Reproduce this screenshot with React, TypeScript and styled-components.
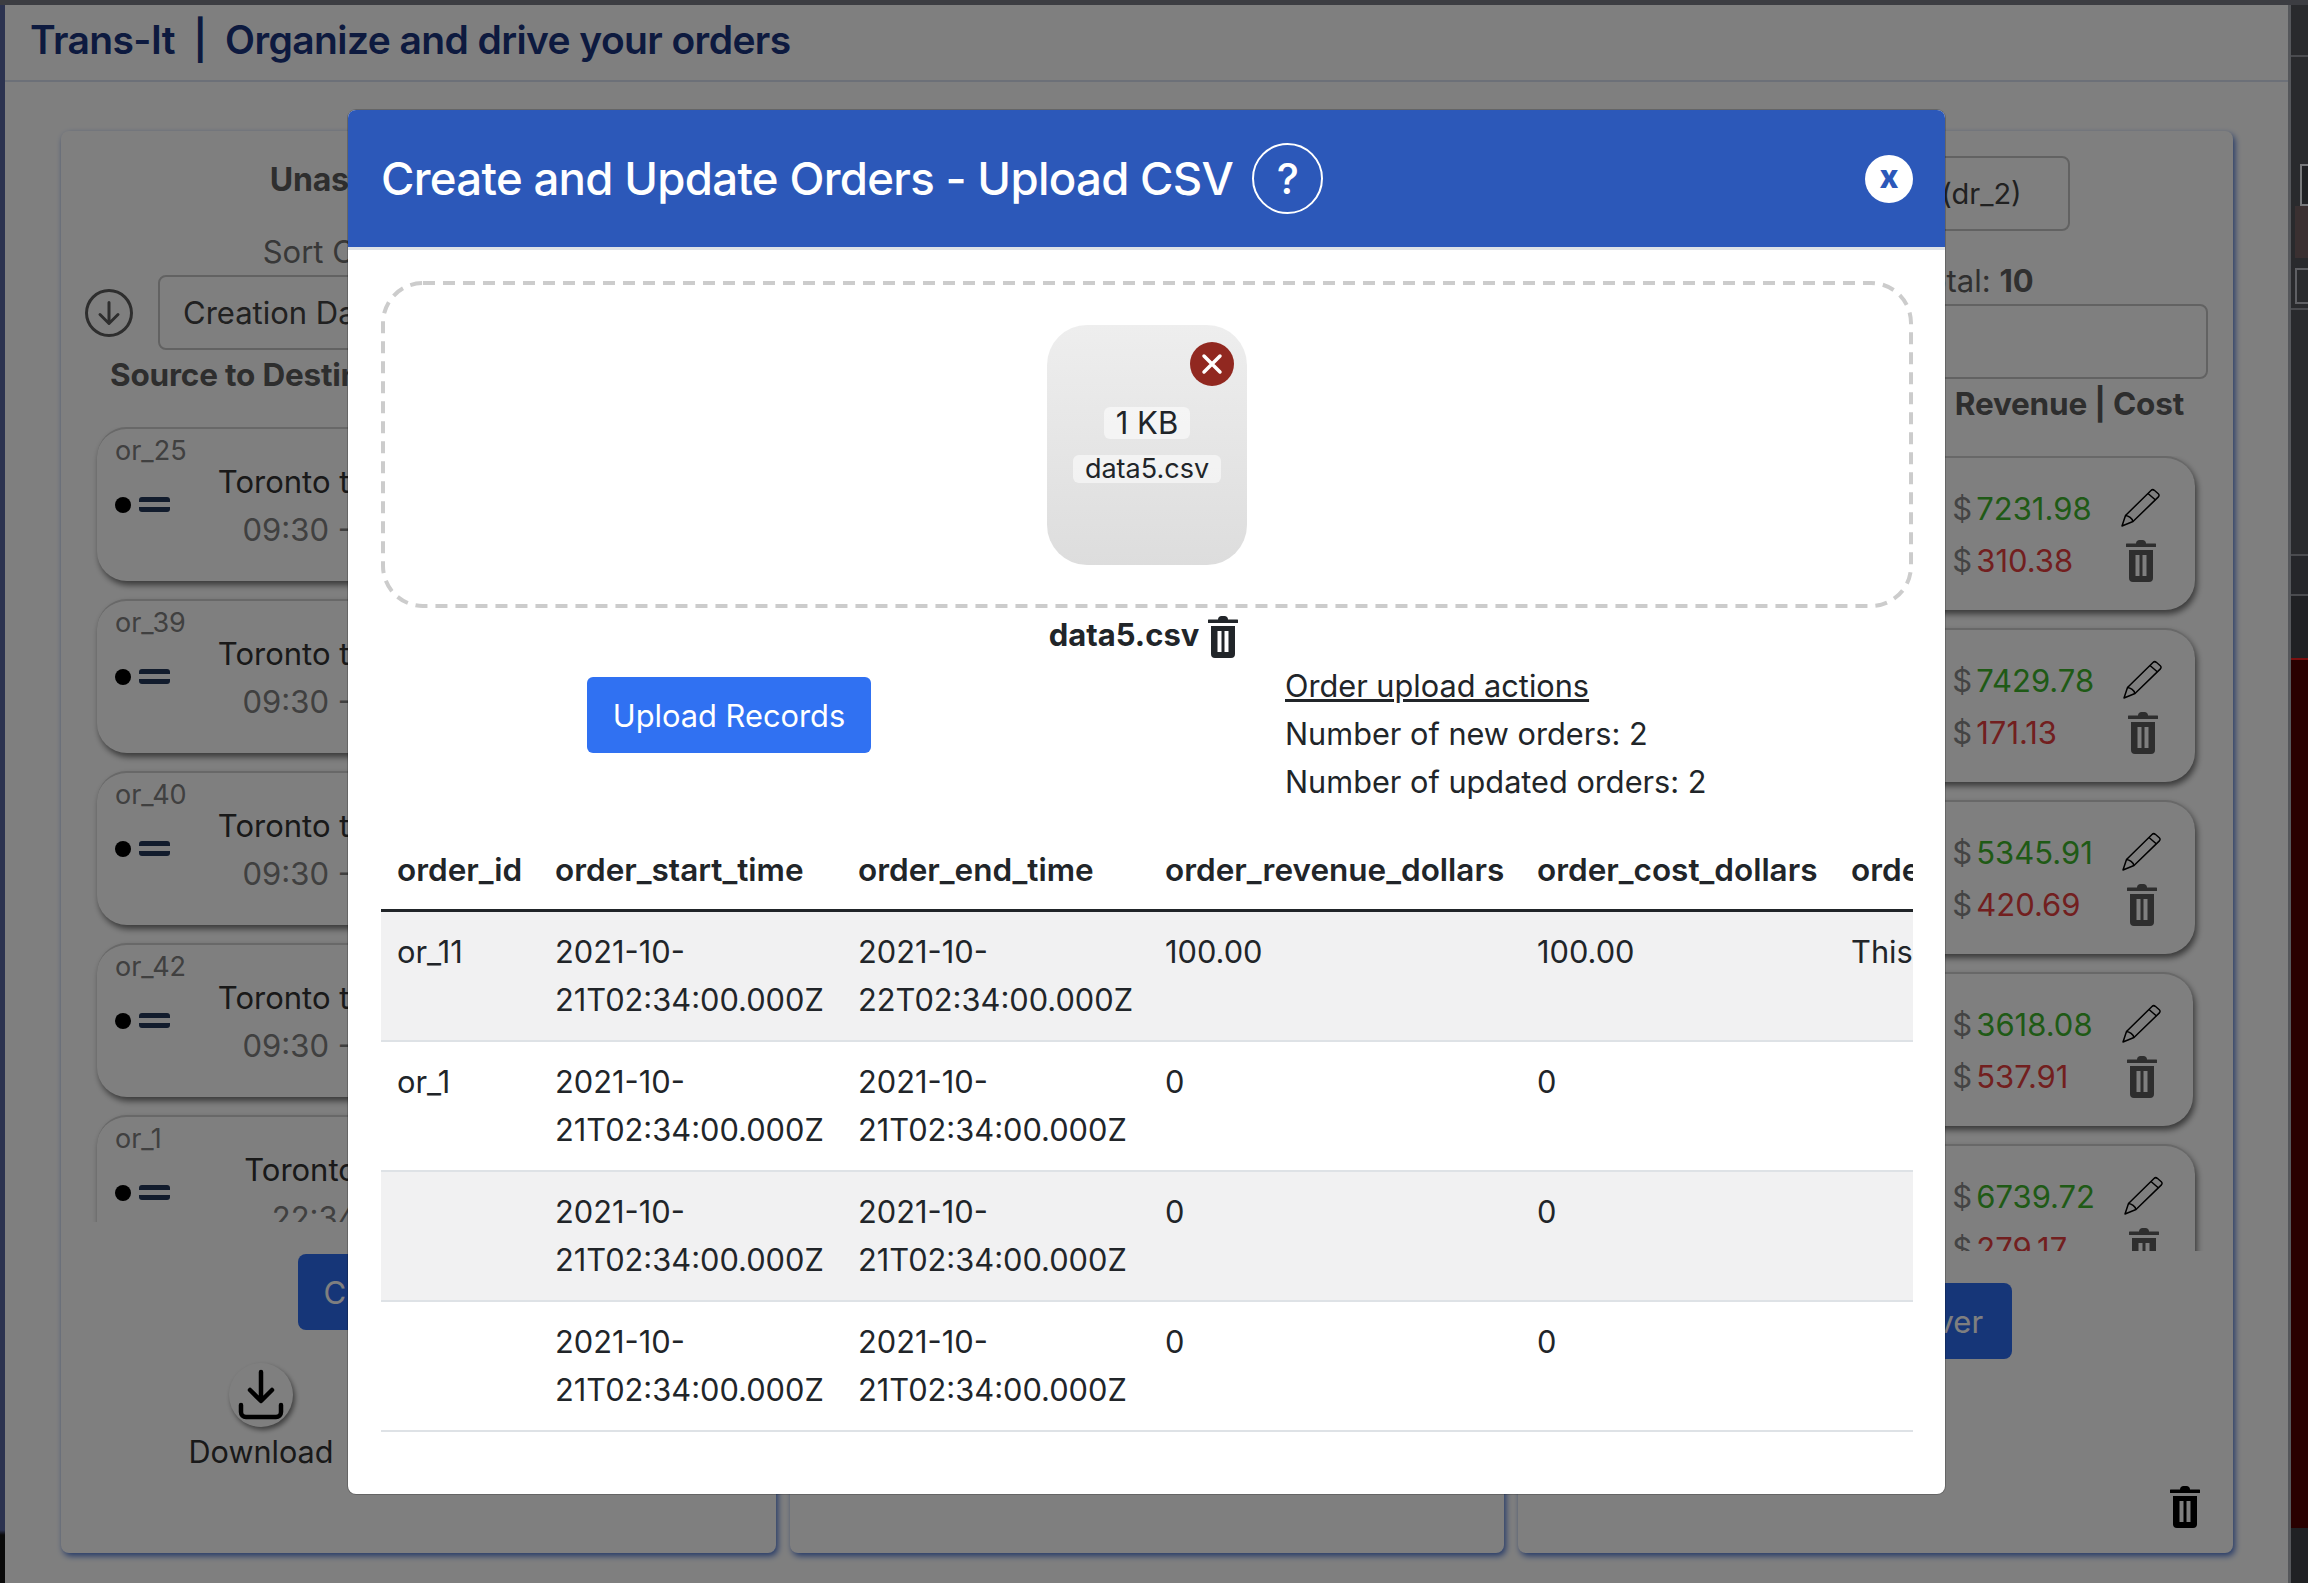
import React from 'react';
import styled, { createGlobalStyle } from 'styled-components';
import { BsArrowDownCircle } from 'react-icons/bs';

const GlobalStyle = createGlobalStyle`
  html, body {
    margin: 0;
    padding: 0;
    height: 1583px;
    overflow: hidden;
    background: #000;
    font-family: Inter, "Noto Sans", sans-serif;
    color: #212529;
  }
  * { box-sizing: border-box; }
`;

const Screen = styled.div`
  width: 2308px;
  height: 1583px;
  display: flex;
  flex-direction: column;
`;

const TopStrip = styled.div`
  height: 5px;
  background: #3c3d42;
  flex: none;
`;

const Frame = styled.div`
  flex: 1;
  display: flex;
  min-height: 0;
`;

const LeftEdge = styled.div`
  width: 5px;
  flex: none;
  background: linear-gradient(to bottom, #2c3350 0, #2c3350 1525px, #0a0a0a 1530px);
`;

const Main = styled.div`
  flex: 1;
  position: relative;
  background: #fff;
  overflow: hidden;
  display: flex;
  flex-direction: column;
`;

const Gutter = styled.div`
  width: 3px;
  flex: none;
  background: #55575b;
`;

const DevPanel = styled.div`
  width: 17px;
  flex: none;
  display: flex;
  flex-direction: column;
  background: #292a2d;
`;

const DevSection = styled.div<{ $h?: number; $bg?: string; $line?: string }>`
  height: ${p => (p.$h ? `${p.$h}px` : 'auto')};
  flex: ${p => (p.$h ? 'none' : '1')};
  background: ${p => p.$bg || '#292a2d'};
  border-bottom: 2px solid ${p => p.$line || '#4a4b4f'};
  padding-top: 1px;
`;

const DevBlock = styled.div<{ $left: number; $top: number; $h: number; $bg: string; $line?: string }>`
  margin: ${p => p.$top}px 0 0 ${p => p.$left}px;
  height: ${p => p.$h}px;
  background: ${p => p.$bg};
  border: ${p => (p.$line ? `2px solid ${p.$line}` : 'none')};
  border-right: none;
`;

const AppHeader = styled.header`
  height: 77px;
  flex: none;
  display: flex;
  align-items: center;
  padding: 0 0 7px 25px;
  border-bottom: 2px solid #d8e0f0;
  background: #fff;
`;

const AppTitle = styled.h1`
  margin: 0;
  font-size: 39px;
  font-weight: 600;
  color: #1a347f;
  white-space: pre;
  letter-spacing: -0.6px;
`;

const Board = styled.div`
  display: flex;
  gap: 14px;
  padding: 49px 55px 0 56px;
`;

const Panel = styled.section`
  flex: 1;
  height: 1422px;
  min-width: 0;
  display: flex;
  flex-direction: column;
  align-items: center;
  border-radius: 8px;
  background: #fff;
  box-shadow: 2px 3px 6px #4a73d0;
`;

const PanelTitle = styled.div`
  margin-top: 30px;
  height: 38px;
  line-height: 38px;
  font-size: 32px;
  font-weight: 700;
  color: #5c5c5c;
  letter-spacing: -0.2px;
`;

const SortLabel = styled.div`
  margin-top: 33px;
  height: 40px;
  line-height: 40px;
  font-size: 31px;
  color: #707070;
`;

const ControlRow = styled.div`
  align-self: stretch;
  display: flex;
  align-items: center;
  gap: 25px;
  margin-top: 3px;
  padding: 0 17px 0 24px;
  color: #5c5c5c;
`;

const SelectBox = styled.div<{ $width?: number; $top?: number }>`
  flex: ${p => (p.$width ? 'none' : '1')};
  width: ${p => (p.$width ? `${p.$width}px` : 'auto')};
  height: 75px;
  margin-top: ${p => p.$top || 0}px;
  display: flex;
  align-items: center;
  justify-content: ${p => (p.$width ? 'flex-end' : 'flex-start')};
  padding: 0 46px 0 23px;
  border: 2px solid #c4c4c4;
  border-radius: 8px;
  font-size: ${p => (p.$width ? 29 : 31)}px;
  color: #424242;
  white-space: nowrap;
`;

const TotalLabel = styled.div`
  margin-top: 30px;
  height: 40px;
  line-height: 40px;
  font-size: 31px;
  color: #616161;
  white-space: nowrap;

  b { font-weight: 700; }
`;

const SearchBox = styled.div`
  align-self: stretch;
  height: 75px;
  margin: 3px 25px 0;
  border: 2px solid #c4c4c4;
  border-radius: 8px;
`;

const ColumnHeads = styled.div`
  align-self: stretch;
  display: flex;
  justify-content: space-between;
  height: 38px;
  line-height: 38px;
  margin-top: 6px;
  padding: 0 49px;
  font-size: 31.5px;
  font-weight: 700;
  color: #5c5c5c;
  letter-spacing: -0.2px;
  white-space: nowrap;
`;

const CardList = styled.div`
  align-self: stretch;
  height: 795px;
  flex: none;
  margin: 33px 25px 0;
  padding: 0 13px 0 11px;
  overflow: hidden;
  display: flex;
  flex-direction: column;
  gap: 18px;
`;

const Card = styled.div<{ $nudge?: number }>`
  flex: none;
  height: 154px;
  margin-right: ${p => p.$nudge || 0}px;
  padding: 10px 41px 0 18px;
  border-radius: 30px;
  background: #fff;
  border-top: 2px solid #d0d0d0;
  box-shadow: 2px 4px 6px rgba(0, 0, 0, 0.55);
`;

const CardId = styled.div`
  height: 24px;
  line-height: 24px;
  font-size: 27px;
  color: #808080;
`;

const CardBody = styled.div`
  height: 86px;
  display: flex;
  align-items: center;
`;

const DragGrip = styled.div`
  width: 55px;
  flex: none;
  display: flex;
  align-items: center;
  gap: 8px;
  margin-top: -3px;
`;

const GripDot = styled.span`
  width: 16px;
  height: 16px;
  border-radius: 50%;
  background: #000;
`;

const GripBars = styled.span`
  width: 31px;
  height: 15px;
  border-top: 5px solid #24385a;
  border-bottom: 5px solid #24385a;
  border-radius: 3px;
`;

const RouteCol = styled.div`
  width: 310px;
  margin-left: 15px;
  flex: none;
  text-align: center;
  white-space: nowrap;
`;

const RouteName = styled.div`
  height: 38px;
  line-height: 38px;
  font-size: 31px;
  color: #333;
`;

const RouteTime = styled.div`
  height: 38px;
  line-height: 38px;
  margin-top: 10px;
  font-size: 31px;
  color: #808080;
`;

const MoneyCol = styled.div`
  margin-left: auto;
  flex: none;
  display: flex;
  flex-direction: column;
  gap: 4px;
`;

const MoneyLine = styled.div`
  display: flex;
  gap: 4px;
  height: 48px;
  line-height: 48px;
  font-size: 31px;
  color: #888;
`;

const Amount = styled.span<{ $loss?: boolean }>`
  color: ${p => (p.$loss ? '#e43f3f' : '#3fb42c')};
`;

const ActionCol = styled.div`
  width: 38px;
  margin-left: 30px;
  flex: none;
  display: flex;
  flex-direction: column;
  align-items: center;
  gap: 13px;
  color: #000;

  svg:last-child { color: #5c5c5c; }
`;

const PrimaryBlock = styled.div<{ $width: number }>`
  width: ${p => p.$width}px;
  height: 76px;
  margin-top: 32px;
  flex: none;
  border-radius: 8px;
  background: #2d6cf0;
  color: #fff;
  display: flex;
  align-items: center;
  justify-content: center;
  font-size: 31px;
  white-space: nowrap;
`;

const DownloadCol = styled.div`
  align-self: flex-start;
  margin: 33px 0 0 130px;
  width: 140px;
  display: flex;
  flex-direction: column;
  align-items: center;
  gap: 5px;
  font-size: 30.6px;
  line-height: 40px;
  color: #333;
`;

const DownloadRound = styled.div`
  width: 64px;
  height: 64px;
  border-radius: 50%;
  background: #fff;
  color: #000;
  display: flex;
  align-items: center;
  justify-content: center;
  box-shadow: 2px 3px 5px rgba(0, 0, 0, 0.5);
`;

const PanelTrash = styled.div`
  margin: auto 33px 25px auto;
  line-height: 0;
  color: #000;
`;

/* modal */

const Overlay = styled.div`
  position: absolute;
  inset: 0;
  padding: 105px 0 0 343px;
  background: rgba(0, 0, 0, 0.5);
`;

const Modal = styled.div`
  width: 1597px;
  height: 1384px;
  border-radius: 8px;
  background: #fff;
  overflow: hidden;
  box-shadow: 0 0 0 1px rgba(0, 0, 0, 0.2);
`;

const ModalHead = styled.div`
  height: 140px;
  display: flex;
  align-items: center;
  padding: 0 32px 0 33px;
  background: #2c58b9;
  border-bottom: 3px solid #dee2e6;
  color: #fff;
`;

const ModalTitle = styled.h2`
  margin: 0;
  font-size: 45.6px;
  font-weight: 500;
  letter-spacing: -0.7px;
  white-space: nowrap;
`;

const HelpRound = styled.div`
  width: 71px;
  height: 71px;
  margin-left: 19px;
  border: 2px solid #fff;
  border-radius: 50%;
  display: flex;
  align-items: center;
  justify-content: center;
  font-size: 42px;
  font-weight: 500;
`;

const CloseRound = styled.div`
  width: 48px;
  height: 48px;
  margin-left: auto;
  border-radius: 50%;
  background: #fff;
  color: #2c58b9;
  display: flex;
  align-items: center;
  justify-content: center;
  font-size: 32px;
  font-weight: 800;
  line-height: 1;
  padding-bottom: 4px;
`;

const ModalBody = styled.div`
  padding: 31px 32px 0 33px;
`;

const dashedOutline = encodeURIComponent(
  '<svg xmlns="http://www.w3.org/2000/svg" width="100%" height="100%"><rect x="2" y="2" width="1528" height="323" rx="40" fill="none" stroke="#cccccc" stroke-width="4" stroke-dasharray="12 8"/></svg>'
);

const DropZone = styled.div`
  height: 327px;
  padding-top: 44px;
  display: flex;
  justify-content: center;
  align-items: flex-start;
  background-image: url("data:image/svg+xml,${dashedOutline}");
`;

const FileThumb = styled.div`
  position: relative;
  width: 200px;
  height: 240px;
  padding-top: 82px;
  display: flex;
  flex-direction: column;
  align-items: center;
  gap: 16px;
  border-radius: 40px;
  background: linear-gradient(to bottom, #eeeeee, #dddddd);
`;

const SizeChip = styled.span`
  height: 32px;
  padding: 0 12px;
  line-height: 32px;
  font-size: 31px;
  border-radius: 6px;
  background: rgba(255, 255, 255, 0.55);
`;

const NameChip = styled.span`
  height: 28px;
  padding: 0 12px;
  line-height: 28px;
  font-size: 27px;
  border-radius: 6px;
  background: rgba(255, 255, 255, 0.55);
`;

const RemoveBadge = styled.div`
  position: absolute;
  top: 17px;
  right: 13px;
  width: 44px;
  height: 44px;
  border-radius: 50%;
  background: #912820;
  display: flex;
  align-items: center;
  justify-content: center;
`;

const FileRow = styled.div`
  margin: 5px 7px 0 0;
  height: 42px;
  display: flex;
  align-items: center;
  justify-content: center;
  gap: 9px;
  font-size: 31px;
  font-weight: 700;
  color: #212529;

  svg { margin-top: 6px; }
`;

const ActionRow = styled.div`
  display: flex;
  align-items: flex-start;
  margin-top: 7px;
`;

const UploadButton = styled.button`
  width: 284px;
  height: 76px;
  margin: 15px 0 0 206px;
  padding: 0;
  border: none;
  border-radius: 6px;
  background: #3071f2;
  color: #fff;
  font: inherit;
  font-size: 30.8px;
`;

const UploadInfo = styled.div`
  margin-left: 414px;
  font-size: 30.7px;
  line-height: 48px;
  color: #212529;
`;

const InfoHeading = styled.div`
  text-decoration: underline;
`;

const TableClip = styled.div`
  margin-top: 23px;
  overflow: hidden;
`;

const OrdersTable = styled.table`
  width: 1834px;
  table-layout: fixed;
  border-collapse: collapse;
  font-size: 30.8px;
  line-height: 48px;
  color: #212529;
`;

const HeadCell = styled.th`
  padding: 17px 16px 15px;
  text-align: left;
  font-size: 31.5px;
  font-weight: 600;
  white-space: nowrap;
  border-bottom: 3px solid #212529;
`;

const BodyRow = styled.tr<{ $striped: boolean }>`
  background: ${p => (p.$striped ? '#f1f1f2' : '#fff')};
`;

const BodyCell = styled.td`
  padding: 16px;
  vertical-align: top;
  border-bottom: 2px solid #dee2e6;
`;

const Trash = ({ w = 30, h = 42 }: { w?: number; h?: number }) => (
  <svg width={w} height={h} viewBox="0 0 30 42" fill="currentColor">
    <path d="M10 3.500C10 1.500 11.500 0 13.500 0h3C18.500 0 20 1.500 20 3.500h9.500a.5.5 0 0 1 .5.5v2.500a.5.5 0 0 1-.5.5H.5a.5.5 0 0 1-.5-.5V4a.5.5 0 0 1 .5-.5z" />
    <path
      fillRule="evenodd"
      d="M3 10h24v28a4 4 0 0 1-4 4H7a4 4 0 0 1-4-4zM9.500 15v21h4V15zM16.500 15v21h4V15z"
    />
  </svg>
);

const Pencil = () => (
  <svg width="40" height="39" viewBox="0 0 40 39" fill="none" stroke="currentColor" strokeWidth="1.500" strokeLinejoin="round">
    <path d="M1 38l3.500-10.500L30 2.500c1-1 2.300-1 3.300-.2l4 3.400c1 .9 1 2.300.1 3.200L12 33.500z" />
    <path d="M4.500 27.500c3 .3 6.800 2.800 7.500 6M27 5.500l7.500 6.500" />
  </svg>
);

const DownloadIcon = () => (
  <svg width="46" height="52" viewBox="0 0 46 52" fill="none" stroke="currentColor" strokeWidth="4.500" strokeLinecap="round" strokeLinejoin="round">
    <path d="M23 3v28M12 21l11 11 11-11" />
    <path d="M3 36v7a5 5 0 0 0 5 5h30a5 5 0 0 0 5-5v-7" />
  </svg>
);

const leftCards = [
  { id: 'or_25', route: 'Toronto to Acton', time: '09:30 - 17:30', rev: '4120.40', cost: '210.15' },
  { id: 'or_39', route: 'Toronto to Acton', time: '09:30 - 17:30', rev: '3875.12', cost: '120.64' },
  { id: 'or_40', route: 'Toronto to Acton', time: '09:30 - 17:30', rev: '2964.50', cost: '318.27' },
  { id: 'or_42', route: 'Toronto to Acton', time: '09:30 - 17:30', rev: '5102.33', cost: '402.80' },
  { id: 'or_1', route: 'Toronto to Ar', time: '22:34 - 2', rev: '0', cost: '0' },
];

const rightCards = [
  { id: 'or_12', route: 'Toronto to Ottawa', time: '09:30 - 17:30', rev: '7231.98', cost: '310.38' },
  { id: 'or_13', route: 'Toronto to Ottawa', time: '09:30 - 17:30', rev: '7429.78', cost: '171.13' },
  { id: 'or_14', route: 'Toronto to Ottawa', time: '09:30 - 17:30', rev: '5345.91', cost: '420.69' },
  { id: 'or_15', route: 'Toronto to Ottawa', time: '09:30 - 17:30', rev: '3618.08', cost: '537.91', nudge: 2 },
  { id: 'or_16', route: 'Toronto to Ottawa', time: '09:30 - 17:30', rev: '6739.72', cost: '279.17' },
];

const columns = [
  { name: 'order_id', width: 158 },
  { name: 'order_start_time', width: 303 },
  { name: 'order_end_time', width: 307 },
  { name: 'order_revenue_dollars', width: 372 },
  { name: 'order_cost_dollars', width: 314 },
  { name: 'order_description', width: 380 },
];

const rows = [
  ['or_11', '2021-10-21T02:34:00.000Z', '2021-10-22T02:34:00.000Z', '100.00', '100.00', 'This'],
  ['or_1', '2021-10-21T02:34:00.000Z', '2021-10-21T02:34:00.000Z', '0', '0', ''],
  ['', '2021-10-21T02:34:00.000Z', '2021-10-21T02:34:00.000Z', '0', '0', ''],
  ['', '2021-10-21T02:34:00.000Z', '2021-10-21T02:34:00.000Z', '0', '0', ''],
];

type CardData = { id: string; route: string; time: string; rev: string; cost: string; nudge?: number };

const OrderCard = ({ card }: { card: CardData }) => (
  <Card $nudge={card.nudge}>
    <CardId>{card.id}</CardId>
    <CardBody>
      <DragGrip>
        <GripDot />
        <GripBars />
      </DragGrip>
      <RouteCol>
        <RouteName>{card.route}</RouteName>
        <RouteTime>{card.time}</RouteTime>
      </RouteCol>
      <MoneyCol>
        <MoneyLine>$<Amount>{card.rev}</Amount></MoneyLine>
        <MoneyLine>$<Amount $loss>{card.cost}</Amount></MoneyLine>
      </MoneyCol>
      <ActionCol>
        <Pencil />
        <Trash />
      </ActionCol>
    </CardBody>
  </Card>
);

export default function App() {
  return (
    <Screen>
      <GlobalStyle />
      <TopStrip />
      <Frame>
        <LeftEdge />
        <Main>
          <AppHeader>
            <AppTitle>Trans-It  |  Organize and drive your orders</AppTitle>
          </AppHeader>
          <Board>
            <Panel>
              <PanelTitle>Unassigned Orders</PanelTitle>
              <SortLabel>Sort Orders By Fields</SortLabel>
              <ControlRow>
                <BsArrowDownCircle size={48} />
                <SelectBox>Creation Date</SelectBox>
              </ControlRow>
              <ColumnHeads>
                <span>Source to Destination</span>
                <span>Revenue | Cost</span>
              </ColumnHeads>
              <CardList>
                {leftCards.map(c => <OrderCard key={c.id} card={c} />)}
              </CardList>
              <PrimaryBlock $width={240}>Create Order</PrimaryBlock>
              <DownloadCol>
                <DownloadRound><DownloadIcon /></DownloadRound>
                Download
              </DownloadCol>
            </Panel>
            <Panel>
              <PanelTitle>Assigned Orders</PanelTitle>
            </Panel>
            <Panel>
              <SelectBox $width={388} $top={25}>Driver 2 (dr_2)</SelectBox>
              <TotalLabel>Active Order Total: <b>10</b></TotalLabel>
              <SearchBox />
              <ColumnHeads>
                <span>Source to Destination</span>
                <span>Revenue | Cost</span>
              </ColumnHeads>
              <CardList>
                {rightCards.map(c => <OrderCard key={c.id} card={c} />)}
              </CardList>
              <PrimaryBlock $width={272}>Remove Driver</PrimaryBlock>
              <PanelTrash><Trash /></PanelTrash>
            </Panel>
          </Board>

          <Overlay>
            <Modal>
              <ModalHead>
                <ModalTitle>Create and Update Orders - Upload CSV</ModalTitle>
                <HelpRound>?</HelpRound>
                <CloseRound>x</CloseRound>
              </ModalHead>
              <ModalBody>
                <DropZone>
                  <FileThumb>
                    <RemoveBadge>
                      <svg width="22" height="22" viewBox="0 0 22 22" stroke="#fff" strokeWidth="3.500" strokeLinecap="round">
                        <path d="M3 3l16 16M19 3L3 19" />
                      </svg>
                    </RemoveBadge>
                    <SizeChip>1 KB</SizeChip>
                    <NameChip>data5.csv</NameChip>
                  </FileThumb>
                </DropZone>
                <FileRow>
                  data5.csv
                  <Trash />
                </FileRow>
                <ActionRow>
                  <UploadButton>Upload Records</UploadButton>
                  <UploadInfo>
                    <InfoHeading>Order upload actions</InfoHeading>
                    <div>Number of new orders: 2</div>
                    <div>Number of updated orders: 2</div>
                  </UploadInfo>
                </ActionRow>
                <TableClip>
                  <OrdersTable>
                    <colgroup>
                      {columns.map(c => <col key={c.name} style={{ width: c.width }} />)}
                    </colgroup>
                    <thead>
                      <tr>
                        {columns.map(c => <HeadCell key={c.name}>{c.name}</HeadCell>)}
                      </tr>
                    </thead>
                    <tbody>
                      {rows.map((row, i) => (
                        <BodyRow key={i} $striped={i % 2 === 0}>
                          {row.map((cell, j) => <BodyCell key={j}>{cell}</BodyCell>)}
                        </BodyRow>
                      ))}
                    </tbody>
                  </OrdersTable>
                </TableClip>
              </ModalBody>
            </Modal>
          </Overlay>
        </Main>
        <Gutter />
        <DevPanel>
          <DevSection $h={52} />
          <DevSection $h={253}>
            <DevBlock $left={9} $top={106} $h={42} $bg="#202124" $line="#77787b" />
            <DevBlock $left={4} $top={0} $h={52} $bg="#3a3031" />
            <DevBlock $left={4} $top={10} $h={36} $bg="#292a2d" $line="#5f6064" />
          </DevSection>
          <DevSection $h={246} />
          <DevSection $h={40} $bg="#25262a" />
          <DevSection $h={64} $bg="#202124" $line="#7a1010" />
          <DevSection $h={868} $bg="#290000" $line="#290000" />
          <DevSection $bg="#202124" $line="#202124" />
        </DevPanel>
      </Frame>
    </Screen>
  );
}
